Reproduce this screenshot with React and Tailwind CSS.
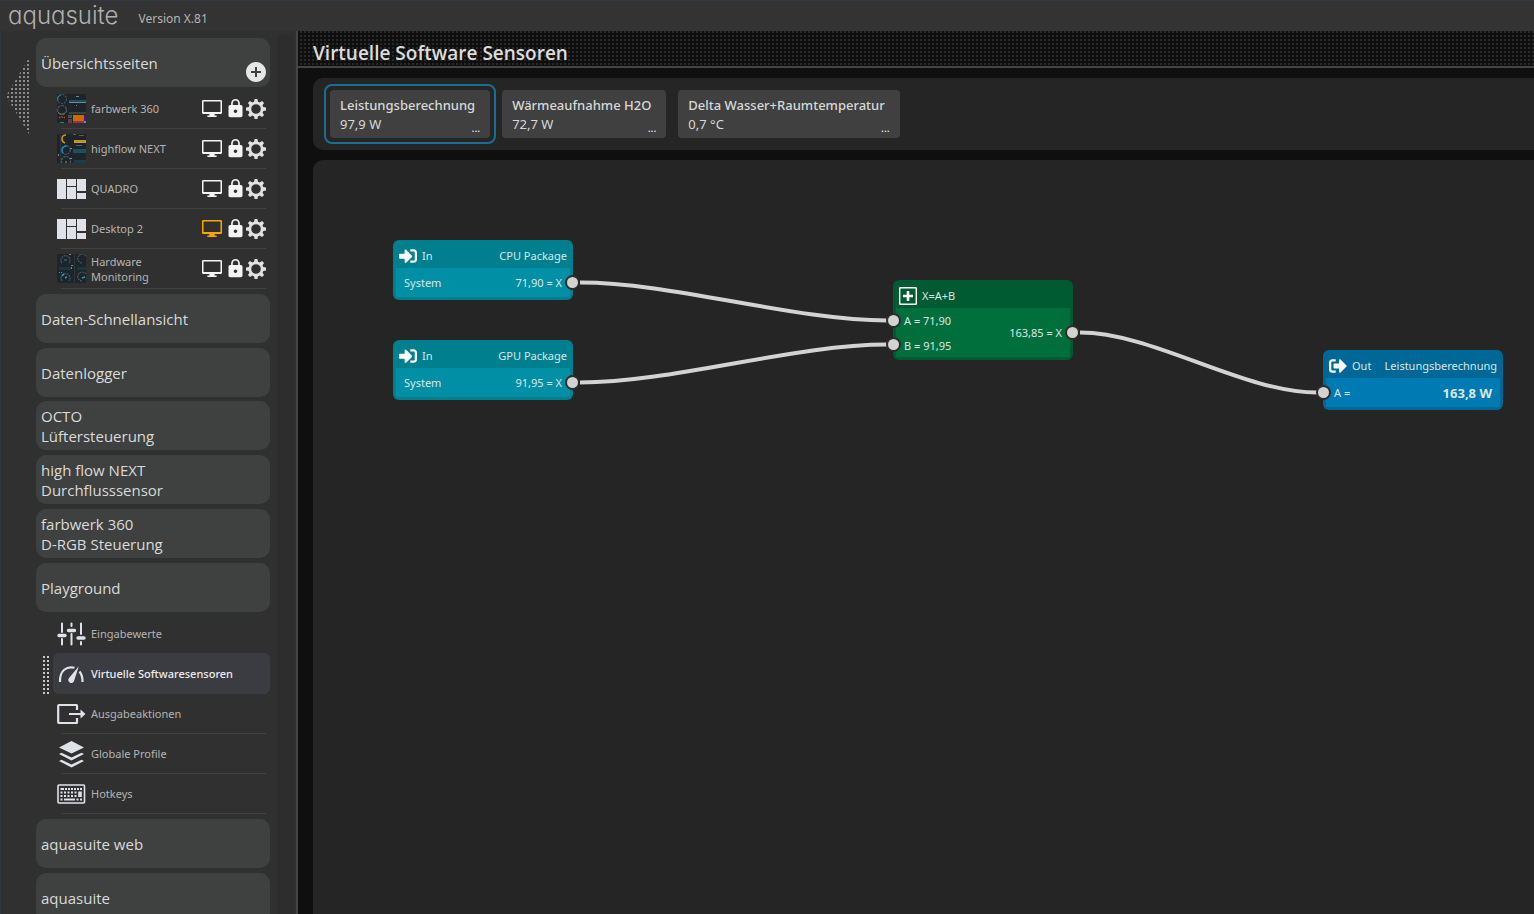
import React from "react";
import { FaSignInAlt, FaSignOutAlt } from "react-icons/fa";
import { MdAddCircle, MdLock } from "react-icons/md";

function MonitorIcon({ className }) {
  return (
    <svg viewBox="0 0 20 17" className={className} fill="currentColor" aria-hidden="true">
      <path
        fillRule="evenodd"
        d="M1.2 0h17.6A1.2 1.2 0 0 1 20 1.2v11.6a1.2 1.2 0 0 1-1.2 1.2H12.6v1.4h2V17H5.4v-1.6h2V14H1.2A1.2 1.2 0 0 1 0 12.8V1.2A1.2 1.2 0 0 1 1.2 0zM1.5 1.500v10.500h17V1.500z"
      />
    </svg>
  );
}

function GearIcon({ className }) {
  const angles = [0, 45, 90, 135, 180, 225, 270, 315];
  return (
    <svg viewBox="-10 -10 20 20" className={className} fill="currentColor" aria-hidden="true">
      {angles.map((a) => (
        <path key={a} d="M-2.1-6.6L-1.4-10h2.8L2.1-6.6z" transform={`rotate(${a})`} />
      ))}
      <circle r="6.2" fill="none" stroke="currentColor" strokeWidth="2.8" />
    </svg>
  );
}

function TilesIcon() {
  return (
    <svg viewBox="0 0 29 20" className="h-5 w-[29px]" fill="#dfe2e9" aria-hidden="true">
      <path d="M0 0h9v20H0zM10 0h9v7h-9zM10 8h9v12h-9zM20 0h9v12h-9zM20 14h9v6h-9z" />
    </svg>
  );
}

function ThumbFarbwerk() {
  return (
    <svg viewBox="0 0 29 29" className="h-[29px] w-[29px]" fill="none" aria-hidden="true">
      <path fill="#1d242a" d="M0 0h29v29H0z" />
      <circle cx="5" cy="5" r="4.5" stroke="#46525c" strokeWidth="1.2" strokeDasharray="2 1" />
      <path d="M1 7A4.5 4.5 0 0 1 4 .8" stroke="#157a9c" strokeWidth="1.3" />
      <circle cx="5" cy="16" r="4.5" stroke="#505a62" strokeWidth="1.2" strokeDasharray="3 1" />
      <path d="M1 18q3 4 7 1" stroke="#77765c" strokeWidth="1" />
      <path fill="#1a5064" d="M12 6h17v2H12z" />
      <path fill="#6f8893" d="M12 8h17v1H12zM19 11h1v1h-1zM19 2h3v1h-3z" />
      <path fill="#3c4436" d="M12 18h17v2H12z" />
      <path d="M2 24q3-2 6 0" stroke="#b8452c" strokeWidth="1.4" strokeDasharray="1.5 1" />
      <path fill="#208c73" d="M3 28h4v1H3z" />
      <path fill="#69402f" d="M11 25h4v4h-4z" />
      <path fill="#3c5360" d="M11 21h4v3h-4z" />
      <path fill="#c86d02" d="M16 21h11v6H16z" />
      <path fill="#a52b49" d="M16 27h11v2H16z" />
      <path fill="#5b0f8c" d="M27 21h2v6h-2z" />
      <path fill="#5190d5" d="M27 27h2v2h-2z" />
    </svg>
  );
}

function ThumbHighflow() {
  return (
    <svg viewBox="0 0 29 29" className="h-[29px] w-[29px]" fill="none" aria-hidden="true">
      <path fill="#1d242a" d="M0 0h29v29H0z" />
      <path fill="#30373c" d="M3 0h1v29H3z" />
      <path d="M9 1Q5 1 5 5q0 3 3 4" stroke="#d1930f" strokeWidth="1.6" />
      <circle cx="9" cy="16" r="4.3" stroke="#4b5862" strokeWidth="1.2" strokeDasharray="2 1" />
      <path d="M10 12a4.3 4.3 0 0 0-4 7" stroke="#168bb8" strokeWidth="1.5" />
      <circle cx="9" cy="27" r="4.5" stroke="#566169" strokeWidth="1.2" strokeDasharray="2 1" />
      <path d="M8 28h2" stroke="#939574" />
      <path fill="#c98e1b" d="M17 6h12v2H17z" />
      <path fill="#b29a66" d="M17 8h12v1H17z" />
      <path fill="#5c5e5a" d="M16 0h3v1h-3zM22 1h5v1h-5zM19 11h6v1h-6z" />
      <path fill="#1c4f60" d="M16 15h13v4H16z" />
      <path fill="#1a3e4b" d="M17 26h12v3H17z" />
      <path fill="#779099" d="M13 14h2v1h-2zM1 20h1v2H1zM13 24h2v1h-2z" />
    </svg>
  );
}

function ThumbHardware() {
  return (
    <svg viewBox="0 0 29 29" className="h-[29px] w-[29px]" fill="none" aria-hidden="true">
      <path fill="#1d242a" d="M0 0h29v29H0z" />
      <path fill="#303338" d="M17 0h1v29h-1z" />
      <g stroke="#4b5862" strokeWidth="1.200" strokeDasharray="2 .7">
        <path d="M5 9a4.500 4.500 0 1 1 7 0M25 9a4.500 4.500 0 1 1 4-7M5 27a4.500 4.500 0 1 1 7 0M25 27a4.500 4.500 0 1 1 4-7" />
      </g>
      <path d="M7 6h3" stroke="#2a7088" strokeWidth="1.200" />
      <path d="M5 22q1-1.500 2-2M8 24l2-1M25 24l3-1" stroke="#16a0d2" strokeWidth="1.400" />
      <path fill="#183743" d="M2 13h12v3H2zM20 13h9v3h-9z" />
      <path fill="#7c868c" d="M14 11h2v1h-2zM14 13h1v2h-1zM12 0h2v1h-2zM2 18h1v1H2zM4 18h1v1H4z" />
    </svg>
  );
}

function SlidersIcon() {
  return (
    <svg viewBox="0 0 29 24" className="h-6 w-[29px]" stroke="#dfe2e9" strokeLinecap="round" aria-hidden="true">
      <path strokeWidth="2" d="M5 1.5V10M5 17v5.500M14.500 1.500V4M14.500 12v10.500M24 1.500V12M24 20v2.500" />
      <path strokeWidth="3.400" d="M2 13.500h6M11.500 8.500h6M21 16h6" />
    </svg>
  );
}

function GaugeIcon() {
  return (
    <svg viewBox="0 0 29 24" className="h-6 w-[29px]" fill="none" stroke="#dfe2e9" aria-hidden="true">
      <path strokeWidth="2.200" d="M3 20C2.500 8 10 4 17.500 5.800M22.500 9.500C25 12.500 25.600 16 25.500 20" />
      <path fill="#dfe2e9" stroke="none" d="M21.800 4.200l-4.600 14.300a3 3 0 1 1-5.200-2.500z" />
    </svg>
  );
}

function ExportIcon() {
  return (
    <svg viewBox="0 0 29 22" className="h-[22px] w-[29px]" fill="none" stroke="#dfe2e9" aria-hidden="true">
      <path strokeWidth="2.200" strokeLinejoin="round" d="M20 7V2.500Q20 2 19.500 2H2Q1.200 2 1.200 2.800v16.400Q1.200 20 2 20h17.500Q20 20 20 19.500V15" />
      <path strokeWidth="2" d="M12 11h13" />
      <path fill="#dfe2e9" stroke="none" d="M23.500 6.500l5 4.500-5 4.500z" />
    </svg>
  );
}

function LayersIcon() {
  return (
    <svg viewBox="0 0 29 28" className="h-7 w-[29px]" fill="#dfe2e9" aria-hidden="true">
      <path d="M14.500 1L27 7.500 14.500 13.500 2 7.500z" />
      <path d="M2 14l2.500-1.200 10 4.700 10-4.700L27 14l-12.500 6.500z" />
      <path d="M2 21l2.500-1.200 10 4.700 10-4.700L27 21l-12.500 6.500z" />
    </svg>
  );
}

function KeyboardIcon() {
  return (
    <svg viewBox="0 0 29 20" className="h-5 w-[29px]" fill="none" stroke="#dfe2e9" aria-hidden="true">
      <rect x="1" y="1" width="26.500" height="18" rx="1" strokeWidth="1.600" />
      <path strokeWidth="1.800" strokeDasharray="3.500 1 2 1 2 1 2 1 2 1 2 1 4" d="M3.500 5h21.500" />
      <path strokeWidth="1.800" strokeDasharray="2 1.500" d="M3.500 8.500h16.500M3.500 12h16.500" />
      <path strokeWidth="3.600" d="M23 7.500v5.500" />
      <path strokeWidth="1.800" strokeDasharray="2 1.500 11 1.500 2 1.500 2" d="M3.500 15.500h21.500" />
    </svg>
  );
}

function Section({ lines, children }) {
  return (
    <div className="relative">
      <button
        type="button"
        className="flex h-[49px] w-full flex-col items-start justify-center rounded-[10px] bg-[#3f4140] pl-[5px] text-left text-[15px] leading-5 text-[#dadada]"
      >
        {lines.map((l) => (
          <span key={l}>{l}</span>
        ))}
      </button>
      {children}
    </div>
  );
}

function Row({ icon, label, controls, active, selected }) {
  return (
    <li
      className={
        selected
          ? "relative -my-px ml-[17px] flex h-[41px] items-center rounded-md bg-[#3b3c41] pl-1"
          : "flex h-[39px] items-center pl-[21px]"
      }
    >
      {selected && (
        <svg className="absolute -left-2.5 top-[3px] h-[38px] w-[6px]" aria-hidden="true">
          <defs>
            <pattern id="grip" width="4" height="4" patternUnits="userSpaceOnUse">
              <rect width="2" height="2" fill="#c8c8c8" />
            </pattern>
          </defs>
          <rect width="6" height="38" fill="url(#grip)" />
        </svg>
      )}
      <a href="#" className="flex min-w-0 flex-1 items-center gap-[5px]">
        <span className="flex w-[29px] shrink-0 justify-center">{icon}</span>
        <span
          className={
            selected
              ? "font-['Noto_Sans',sans-serif] text-[11px] font-medium leading-[15px] text-[#ececec]"
              : "max-w-20 font-['Noto_Sans',sans-serif] text-[11px] leading-[15px] text-[#b4b4b4]"
          }
        >
          {label}
        </span>
      </a>
      {controls && (
        <div className="mr-1 flex items-center">
          <button type="button" aria-label={`${label} auf Desktop anzeigen`} className="mr-[3px] flex">
            <MonitorIcon className={active ? "h-[17px] w-5 text-[#ffa500]" : "h-[17px] w-5 text-[#f4f4f4]"} />
          </button>
          <button type="button" aria-label={`${label} sperren`} className="flex">
            <MdLock className="h-[21px] w-[21px] text-[#f4f4f4]" />
          </button>
          <button type="button" aria-label={`${label} Einstellungen`} className="flex">
            <GearIcon className="h-5 w-5 text-[#e2e2e2]" />
          </button>
        </div>
      )}
    </li>
  );
}

function RowList({ rows }) {
  return (
    <ul className="mt-0.5">
      {rows.map((r) => (
        <React.Fragment key={r.label}>
          <Row {...r} />
          <li aria-hidden="true" className="ml-[25px] mr-1 h-px bg-[#414144]" />
        </React.Fragment>
      ))}
    </ul>
  );
}

const pages = [
  { label: "farbwerk 360", icon: <ThumbFarbwerk />, controls: true },
  { label: "highflow NEXT", icon: <ThumbHighflow />, controls: true },
  { label: "QUADRO", icon: <TilesIcon />, controls: true },
  { label: "Desktop 2", icon: <TilesIcon />, controls: true, active: true },
  { label: "Hardware Monitoring", icon: <ThumbHardware />, controls: true },
];

const playground = [
  { label: "Eingabewerte", icon: <SlidersIcon /> },
  { label: "Virtuelle Softwaresensoren", icon: <GaugeIcon />, selected: true },
  { label: "Ausgabeaktionen", icon: <ExportIcon /> },
  { label: "Globale Profile", icon: <LayersIcon /> },
  { label: "Hotkeys", icon: <KeyboardIcon /> },
];

function Sidebar() {
  return (
    <div className="flex w-[298px] shrink-0 overflow-hidden border-l border-r-2 border-l-[#30363f] border-r-[#444444] bg-[#303030]">
      <button type="button" aria-label="Seitenleiste einklappen" className="mt-7 h-[78px] w-[35px] shrink-0 pl-[5px]">
        <svg className="h-[78px] w-6" viewBox="0 0 24 78" aria-hidden="true">
          <defs>
            <pattern id="arrow" x="1" y="1" width="4" height="4" patternUnits="userSpaceOnUse">
              <rect width="2" height="2" fill="#8c8c8c" />
            </pattern>
          </defs>
          <path d="M26-6v86L0 37z" fill="url(#arrow)" />
        </svg>
      </button>
      <nav className="mt-[7px] flex flex-1 flex-col gap-1">
        <div className="flex flex-col gap-[5px]">
          <Section lines={["Übersichtsseiten"]}>
            <button type="button" aria-label="Seite hinzufügen" className="absolute right-0.5 top-[22px]">
              <MdAddCircle className="h-6 w-6 text-[#e6e6e6]" />
            </button>
            <RowList rows={pages} />
          </Section>
          <Section lines={["Daten-Schnellansicht"]} />
          <Section lines={["Datenlogger"]} />
        </div>
        <div className="flex flex-col gap-[5px]">
          <Section lines={["OCTO", "Lüftersteuerung"]} />
          <Section lines={["high flow NEXT", "Durchflusssensor"]} />
          <Section lines={["farbwerk 360", "D-RGB Steuerung"]} />
          <Section lines={["Playground"]}>
            <RowList rows={playground} />
          </Section>
          <Section lines={["aquasuite web"]} />
          <Section lines={["aquasuite"]} />
        </div>
      </nav>
      <div className="ml-[7px] mr-[3px] mt-1 w-4 bg-[#2d2d2d]" />
    </div>
  );
}

function SensorCard({ name, value, selected }) {
  return (
    <div className={selected ? "rounded-lg border-2 border-[#1a6d93] p-1" : "p-1.5"}>
      <div className="relative flex h-12 rounded bg-[#404040]">
        <button
          type="button"
          className="flex flex-col items-start pl-2.5 pr-[15px] pt-[5px] text-left font-['Noto_Sans',sans-serif] text-[13px] leading-5 text-[#d8d8d8]"
        >
          <span className="font-medium">{name}</span>
          <span className="-mt-px">{value}</span>
        </button>
        <button
          type="button"
          aria-label={`${name} Optionen`}
          className="absolute bottom-1 right-2.5 text-[11px] leading-3 text-white"
        >
          ...
        </button>
      </div>
    </div>
  );
}

function Port({ className }) {
  return <span className={`absolute h-[15px] w-[15px] rounded-full border-2 border-[#302b2b] bg-[#d3d3d3] ${className}`} />;
}

function Node({ className, bodyClass, icon, kind, title, children }) {
  return (
    <section
      className={`absolute flex w-[180px] flex-col rounded-md px-[3px] pb-[3px] font-['Noto_Sans',sans-serif] text-[11px] text-[#dce6e6] ${className}`}
    >
      <header className="flex h-7 shrink-0 items-center justify-between px-[3px] pt-1">
        <span className="flex items-center gap-[5px]">
          {icon}
          {kind}
        </span>
        <span>{title}</span>
      </header>
      <div className={`flex flex-1 items-center justify-between px-2 pt-0.5 ${bodyClass}`}>{children}</div>
    </section>
  );
}

function InputNode({ className, title, value }) {
  return (
    <Node
      className={`h-[60px] bg-[#00808e] ${className}`}
      bodyClass="bg-[#008fa5]"
      icon={<FaSignInAlt className="h-[18px] w-[18px] text-white" />}
      kind="In"
      title={title}
    >
      <span>System</span>
      <span>{value} = X</span>
      <Port className="-right-[7px] top-[35px]" />
    </Node>
  );
}

function Canvas() {
  return (
    <main className="relative ml-[15px] mt-2.5 flex-1 overflow-hidden rounded-tl-[10px] bg-[#252525]">
      <svg className="absolute inset-0 h-full w-full" fill="none" stroke="#d3d3d3" strokeWidth="4" aria-hidden="true">
        <path d="M267 122.500C360 122.500 481 160.500 574 160.500" />
        <path d="M267 222.500C360 222.500 481 184.500 574 184.500" />
        <path d="M767 172.500C840 172.500 930 232.500 1004 232.500" />
      </svg>
      <InputNode className="left-20 top-20" title="CPU Package" value="71,90" />
      <InputNode className="left-20 top-[180px]" title="GPU Package" value="91,95" />
      <Node
        className="left-[580px] top-[120px] h-20 bg-[#005b32]"
        bodyClass="bg-[#006f3c]"
        icon={
          <svg viewBox="0 0 18 18" className="h-[18px] w-[18px]" fill="none" stroke="#fff" aria-hidden="true">
            <rect x=".7" y=".7" width="16.600" height="16.600" rx=".5" strokeWidth="1.400" />
            <path strokeWidth="2.600" d="M4 9h10M9 4v10" />
          </svg>
        }
        kind="X=A+B"
      >
        <span className="flex flex-col gap-2.5 pb-0.5 leading-[15px]">
          <span>A = 71,90</span>
          <span>B = 91,95</span>
        </span>
        <span>163,85 = X</span>
        <Port className="-left-[7px] top-[33px]" />
        <Port className="-left-[7px] top-[57px]" />
        <Port className="-right-[7px] top-[45px]" />
      </Node>
      <Node
        className="left-[1010px] top-[190px] h-[60px] bg-[#006896]"
        bodyClass="bg-[#007ab2]"
        icon={<FaSignOutAlt className="h-[18px] w-[18px] text-white" />}
        kind="Out"
        title="Leistungsberechnung"
      >
        <span>A =</span>
        <span className="text-[13px] font-bold">163,8 W</span>
        <Port className="-left-[7px] top-[35px]" />
      </Node>
    </main>
  );
}

export default function App() {
  return (
    <div className="flex h-screen flex-col overflow-hidden bg-[#0f0f0f] font-['Open_Sans','Noto_Sans',sans-serif]">
      <header className="flex h-[31px] shrink-0 items-center gap-5 border-t border-t-[#303846] bg-[#333333] pl-2">
        <span className="font-['Inter',sans-serif] text-[24px] font-light leading-[30px] text-[#b0b0b0] [font-feature-settings:'cv11']">
          aquasuite
        </span>
        <span className="pt-1.5 font-['Noto_Sans',sans-serif] text-[12px] text-[#b4b4b4]">Version X.81</span>
      </header>
      <div className="flex min-h-0 flex-1">
        <Sidebar />
        <div className="flex min-w-0 flex-1 flex-col">
          <div className="flex h-[37px] shrink-0 items-center border-b-2 border-[#444444] bg-[conic-gradient(from_90deg_at_2px_2px,#0f0f0f_75%,#292929_0)] bg-[length:4px_4px] bg-[position:0px_0px] pl-[15px] pt-2">
            <h1 className="text-[19px] font-semibold leading-7 text-[#dcdcdc]">Virtuelle Software Sensoren</h1>
          </div>
          <div className="ml-[15px] mt-2.5 flex h-[72px] shrink-0 items-center rounded-l-[10px] bg-[#252525] pl-[11px]">
            <SensorCard name="Leistungsberechnung" value="97,9 W" selected />
            <SensorCard name="Wärmeaufnahme H2O" value="72,7 W" />
            <SensorCard name="Delta Wasser+Raumtemperatur" value="0,7 °C" />
          </div>
          <Canvas />
        </div>
      </div>
    </div>
  );
}
